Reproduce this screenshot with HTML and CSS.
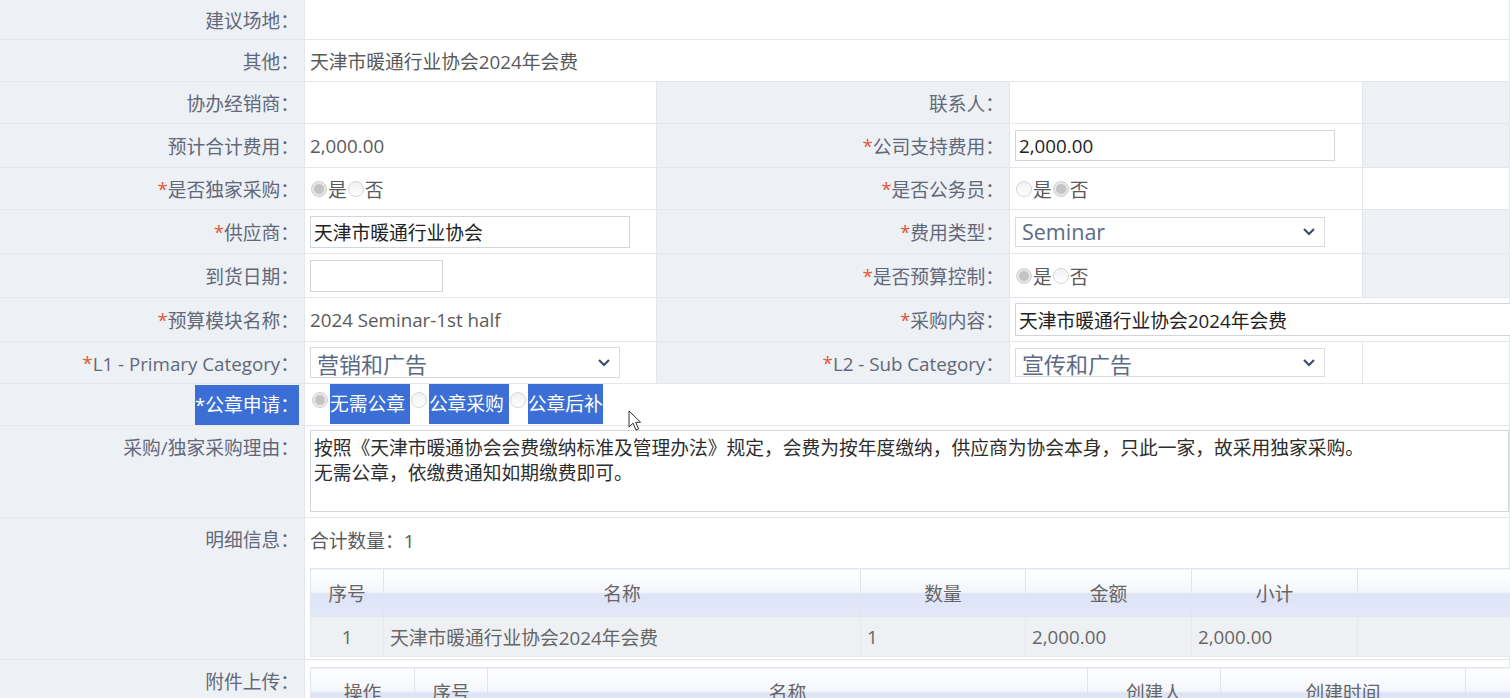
FILE: index.html
```html
<!DOCTYPE html>
<html lang="zh-CN">
<head>
<meta charset="utf-8">
<title>申请表单</title>
<link rel="stylesheet" href="styles.css">
</head>
<body>
<div class="page">
  <div class="form">
    <div class="cell lbl">建议场地：</div>
    <div class="cell val span4"></div>

    <div class="cell lbl">其他：</div>
    <div class="cell val span4">天津市暖通行业协会2024年会费</div>

    <div class="cell lbl">协办经销商：</div>
    <div class="cell val"></div>
    <div class="cell lbl">联系人：</div>
    <div class="cell val"></div>
    <div class="cell lbl"></div>

    <div class="cell lbl">预计合计费用：</div>
    <div class="cell val">2,000.00</div>
    <div class="cell lbl"><b class="req">*</b>公司支持费用：</div>
    <div class="cell val"><div class="inp w320 h31">2,000.00</div></div>
    <div class="cell lbl"></div>

    <div class="cell lbl"><b class="req">*</b>是否独家采购：</div>
    <div class="cell val"><span class="radio on"></span>是<span class="radio"></span>否</div>
    <div class="cell lbl"><b class="req">*</b>是否公务员：</div>
    <div class="cell val"><span class="radio"></span>是<span class="radio on"></span>否</div>
    <div class="cell val"></div>

    <div class="cell lbl"><b class="req">*</b>供应商：</div>
    <div class="cell val"><div class="inp w320 h32">天津市暖通行业协会</div></div>
    <div class="cell lbl"><b class="req">*</b>费用类型：</div>
    <div class="cell val">
      <div class="select h30">Seminar<svg class="chev" width="14" height="9" viewBox="0 0 14 9"><polyline points="2,2 7,7 12,2" fill="none" stroke="#3f4d68" stroke-width="2.2"/></svg></div>
    </div>
    <div class="cell lbl"></div>

    <div class="cell lbl">到货日期：</div>
    <div class="cell val"><div class="inp w132 h32"></div></div>
    <div class="cell lbl"><b class="req">*</b>是否预算控制：</div>
    <div class="cell val"><span class="radio on"></span>是 <span class="radio"></span>否</div>
    <div class="cell lbl"></div>

    <div class="cell lbl"><b class="req">*</b>预算模块名称：</div>
    <div class="cell val">2024 Seminar-1st half</div>
    <div class="cell lbl"><b class="req">*</b>采购内容：</div>
    <div class="cell val span2"><div class="inp wide h33">天津市暖通行业协会2024年会费</div></div>

    <div class="cell lbl"><b class="req">*</b>L1 - Primary Category：</div>
    <div class="cell val">
      <div class="select h31 cjk">营销和广告<svg class="chev" width="14" height="9" viewBox="0 0 14 9"><polyline points="2,2 7,7 12,2" fill="none" stroke="#3f4d68" stroke-width="2.2"/></svg></div>
    </div>
    <div class="cell lbl"><b class="req">*</b>L2 - Sub Category：</div>
    <div class="cell val">
      <div class="select h29 cjk">宣传和广告<svg class="chev" width="14" height="9" viewBox="0 0 14 9"><polyline points="2,2 7,7 12,2" fill="none" stroke="#3f4d68" stroke-width="2.2"/></svg></div>
    </div>
    <div class="cell val"></div>

    <div class="cell lbl"><span class="sel">*公章申请：</span></div>
    <div class="cell val span4 seal">
      <span class="radio on"></span><span class="sel">无需公章 </span><span class="radio"></span><span class="sel">公章采购 </span><span class="radio"></span><span class="sel">公章后补</span>
    </div>

    <div class="cell lbl top">采购/独家采购理由：</div>
    <div class="cell val span4 top">
      <div class="area">按照《天津市暖通协会会费缴纳标准及管理办法》规定，会费为按年度缴纳，供应商为协会本身，只此一家，故采用独家采购。<br>无需公章，依缴费通知如期缴费即可。</div>
    </div>

    <div class="cell lbl top">明细信息：</div>
    <div class="cell val span4 top col">
      <div class="total">合计数量：1</div>
      <table class="sub detail">
        <colgroup><col style="width:73px"><col style="width:477px"><col style="width:165px"><col style="width:166px"><col style="width:166px"><col style="width:163px"></colgroup>
        <thead><tr><th>序号</th><th>名称</th><th>数量</th><th>金额</th><th>小计</th><th></th></tr></thead>
        <tbody><tr><td class="c">1</td><td>天津市暖通行业协会2024年会费</td><td>1</td><td>2,000.00</td><td>2,000.00</td><td></td></tr></tbody>
      </table>
    </div>

    <div class="cell lbl top">附件上传：</div>
    <div class="cell val span4 top col">
      <table class="sub files">
        <colgroup><col style="width:104px"><col style="width:73px"><col style="width:600px"><col style="width:133px"><col style="width:245px"><col style="width:65px"></colgroup>
        <thead><tr><th>操作</th><th>序号</th><th>名称</th><th>创建人</th><th>创建时间</th><th></th></tr></thead>
      </table>
    </div>
  </div>

  <svg class="cursor" width="14" height="22" viewBox="0 0 14 22"><path d="M1 1 L1 17 L5 13.2 L8 20 L10.6 18.9 L7.7 12.3 L12.6 12.3 Z" fill="#fff" stroke="#333" stroke-width="1" stroke-linejoin="round"/></svg>
</div>
</body>
</html>
```

FILE: styles.css
```css
body {
  margin: 0;
  font-family: "Open Sans", "Noto Sans CJK SC", sans-serif;
  font-size: 18.75px;
  color: #5a5a5a;
  background: #fff;
}

.page {
  position: relative;
  width: 1510px;
  height: 698px;
  overflow: hidden;
  background: #fff;
}

.form {
  display: grid;
  grid-template-columns: 305px 352px 353px 353px 147px;
  grid-template-rows: 40px 42px 42px 44px 42px 44px 44px 44px 42px 42px 92px 142px 80px;
}

.cell {
  box-sizing: border-box;
  display: flex;
  align-items: center;
  min-width: 0;
  border-bottom: 1px solid #e3e6ea;
  border-right: 1px solid #e3e6ea;
  white-space: nowrap;
}

.lbl {
  justify-content: flex-end;
  padding-right: 5px;
  background: #edf0f4;
  color: #62687a;
}

.val {
  padding-left: 5px;
  background: #fff;
}

.span4 { grid-column: span 4; }
.span2 { grid-column: span 2; }

.top {
  align-items: flex-start;
  padding-top: 7px;
}

.col {
  flex-direction: column;
  align-items: flex-start;
}

.req {
  font-weight: normal;
  color: #e05a3a;
}

.inp {
  box-sizing: border-box;
  display: flex;
  align-items: center;
  flex: none;
  padding-left: 3px;
  border: 1px solid #d2d5da;
  background: #fff;
  color: #222;
}

.w320 { width: 320px; }
.w132 { width: 133px; }
.wide { width: 560px; }
.h29 { height: 29px; }
.h30 { height: 30px; }
.h31 { height: 31px; }
.h32 { height: 32px; }
.h33 { height: 33px; }

.select {
  box-sizing: border-box;
  display: flex;
  align-items: center;
  justify-content: space-between;
  width: 310px;
  padding: 0 8px 0 6px;
  border: 1px solid #d8dbdf;
  background: #fff;
  color: #5b6a84;
  font-size: 21.5px;
}

.select.cjk {
  font-size: 22px;
}

.chev { flex: none; }

.radio {
  box-sizing: border-box;
  display: inline-block;
  width: 16px;
  height: 16px;
  margin: 0 1px 0 1px;
  border: 1px solid #d6d6d6;
  border-radius: 50%;
  background: linear-gradient(#f1f1f1, #ffffff);
  vertical-align: 2px;
}

.radio.on {
  border-color: #d0d0d0;
  background: radial-gradient(circle, #c4c4c4 0, #c4c4c4 4.5px, #e6e6e6 5.5px);
}

.sel {
  display: inline-block;
  line-height: 40px;
  background: #3c6fd5;
  color: #fff;
  white-space: pre;
}

.lbl .sel .req { color: #fff; }

.seal {
  align-items: flex-start;
  padding-left: 6px;
}

.seal .radio {
  margin-top: 8px;
  margin-right: 2px;
}

.area {
  box-sizing: border-box;
  width: 1230px;
  height: 82px;
  margin-top: -3px;
  padding: 4px 3px;
  border: 1px solid #d2d5da;
  line-height: 25px;
  color: #2e2e2e;
  white-space: nowrap;
}

.total {
  line-height: 26px;
  padding-top: 3px;
  color: #5a5a5a;
}

.sub {
  table-layout: fixed;
  width: 1210px;
  border-collapse: collapse;
  font-size: 18.75px;
}

.detail { margin-top: 14px; }
.files { margin-top: 0; }

.sub th {
  height: 47px;
  padding: 0;
  border: 1px solid #e1e4ea;
  background: linear-gradient(to bottom, #ffffff 0%, #f4f6fb 48%, #dde4f6 52%, #e3e8f8 100%);
  color: #666;
  font-weight: normal;
  text-align: center;
}

.sub td {
  height: 39px;
  padding: 0 6px;
  border: 1px solid #e6e8ec;
  background: #eef0f3;
  color: #666;
  overflow: hidden;
}

.sub td.c { text-align: center; }

.cursor {
  position: absolute;
  left: 628px;
  top: 410px;
}
```
